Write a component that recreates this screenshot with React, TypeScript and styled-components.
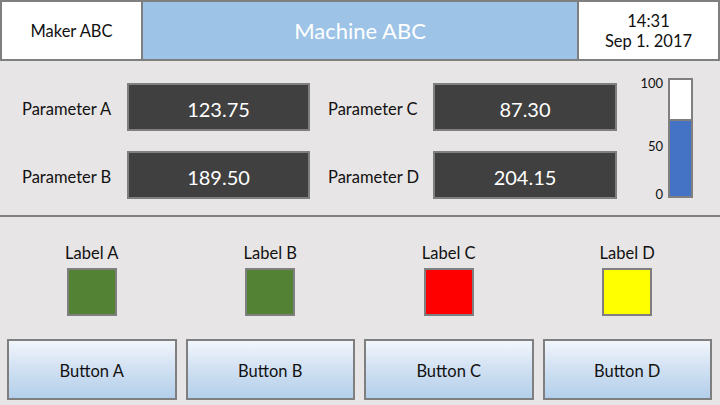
import React from 'react';
import styled, {createGlobalStyle} from 'styled-components';

const GlobalStyle = createGlobalStyle`
  body {
    margin: 0;
    background: #e7e5e5;
    font-family: Lato, "Open Sans", sans-serif;
    color: #111;
  }
`

const Page = styled.div`
  width: 720px;
  height: 405px;
  overflow: hidden;
  background: #e7e5e5;
`

const Header = styled.header`
  height: 61px;
  box-sizing: border-box;
  border: 2px solid #7f7f7f;
  display: grid;
  grid-template-columns: 139px 436px 141px;
`

const HeaderCell = styled.div<{ $accent?: boolean; $divided?: boolean }>`
  display: flex;
  flex-direction: column;
  align-items: center;
  justify-content: center;
  background: ${p => p.$accent ? '#9dc3e6' : '#fff'};
  color: ${p => p.$accent ? '#fff' : '#111'};
  border-left: ${p => p.$divided ? '2px solid #7f7f7f' : 'none'};
  font-size: ${p => p.$accent ? '22px' : '16.5px'};
  line-height: 20px;
`

const TopPanel = styled.section`
  height: 154px;
  display: flex;
  border-bottom: 2px solid #7f7f7f;
`

const ParamGrid = styled.div`
  display: grid;
  grid-template-columns: 105px 183px 123px 184px;
  grid-auto-rows: 48px;
  row-gap: 20px;
  padding: 22px 0 0 22px;
`

const ParamLabel = styled.div<{ $indent?: boolean }>`
  display: flex;
  align-items: center;
  padding: 3px 0 0 ${p => p.$indent ? '18px' : '0'};
  font-size: 16.5px;
`

const ValueBox = styled.div`
  display: flex;
  align-items: center;
  justify-content: center;
  box-sizing: border-box;
  padding-top: 3px;
  background: #404040;
  border: 2px solid #7f7f7f;
  color: #fff;
  font-size: 20px;
`

const Gauge = styled.div`
  margin-left: auto;
  padding: 17px 27px 0 0;
  display: flex;
  gap: 5px;
`

const Scale = styled.div`
  width: 30px;
  margin-top: -2px;
  height: 125px;
  display: flex;
  flex-direction: column;
  align-items: flex-end;
  font-size: 13px;
  line-height: 14px;
`

const Tick = styled.span<{ $gap?: string }>`
  margin-top: ${p => p.$gap || '0'};
`

const Bar = styled.div`
  width: 25px;
  height: 120px;
  box-sizing: border-box;
  border: 2px solid #7f7f7f;
  background: #fff;
  display: flex;
  flex-direction: column;
  justify-content: flex-end;
`

const Fill = styled.div`
  background: #4472c4;
  border-top: 2px solid #7f7f7f;
`

const BottomPanel = styled.section`
  padding: 27px 8px 0 7px;
  display: grid;
  grid-template-columns: repeat(4, 1fr);
  column-gap: 9px;
`

const Indicator = styled.div`
  display: flex;
  flex-direction: column;
  align-items: center;
  font-size: 16.5px;
  line-height: 18px;
`

const Lamp = styled.div<{ $color: string }>`
  width: 50px;
  height: 48px;
  margin-top: 6px;
  box-sizing: border-box;
  border: 2px solid #7f7f7f;
  background: ${p => p.$color};
`

const Button = styled.button`
  margin-top: 23px;
  height: 61px;
  box-sizing: border-box;
  border: 2px solid #7f7f7f;
  border-radius: 0;
  background: linear-gradient(to bottom, #f2f6fc 0%, #d3e2f3 45%, #b3cfea 100%);
  font-family: Lato, "Open Sans", sans-serif;
  font-size: 16.5px;
  color: #111;
  padding: 2px 0 0;
`

const params = [
    {name: 'Parameter A', value: '123.75'},
    {name: 'Parameter C', value: '87.30'},
    {name: 'Parameter B', value: '189.50'},
    {name: 'Parameter D', value: '204.15'},
]

const lamps = [
    {label: 'Label A', color: '#548235', button: 'Button A'},
    {label: 'Label B', color: '#548235', button: 'Button B'},
    {label: 'Label C', color: '#ff0000', button: 'Button C'},
    {label: 'Label D', color: '#ffff00', button: 'Button D'},
]

const level = 65

function App() {
    return (
        <Page>
            <GlobalStyle/>
            <Header>
                <HeaderCell>Maker ABC</HeaderCell>
                <HeaderCell $accent $divided>Machine ABC</HeaderCell>
                <HeaderCell $divided>
                    <span>14:31</span>
                    <span>Sep 1. 2017</span>
                </HeaderCell>
            </Header>
            <TopPanel>
                <ParamGrid>
                    {params.map((p, i) =>
                        <React.Fragment key={p.name}>
                            <ParamLabel $indent={i % 2 === 1}>{p.name}</ParamLabel>
                            <ValueBox>{p.value}</ValueBox>
                        </React.Fragment>
                    )}
                </ParamGrid>
                <Gauge>
                    <Scale>
                        <Tick>100</Tick>
                        <Tick $gap="49px">50</Tick>
                        <Tick $gap="auto">0</Tick>
                    </Scale>
                    <Bar>
                        <Fill style={{height: `${level}%`}}/>
                    </Bar>
                </Gauge>
            </TopPanel>
            <BottomPanel>
                {lamps.map(l =>
                    <Indicator key={l.label}>
                        {l.label}
                        <Lamp $color={l.color}/>
                    </Indicator>
                )}
                {lamps.map(l => <Button key={l.button}>{l.button}</Button>)}
            </BottomPanel>
        </Page>
    );
}

export default App;
